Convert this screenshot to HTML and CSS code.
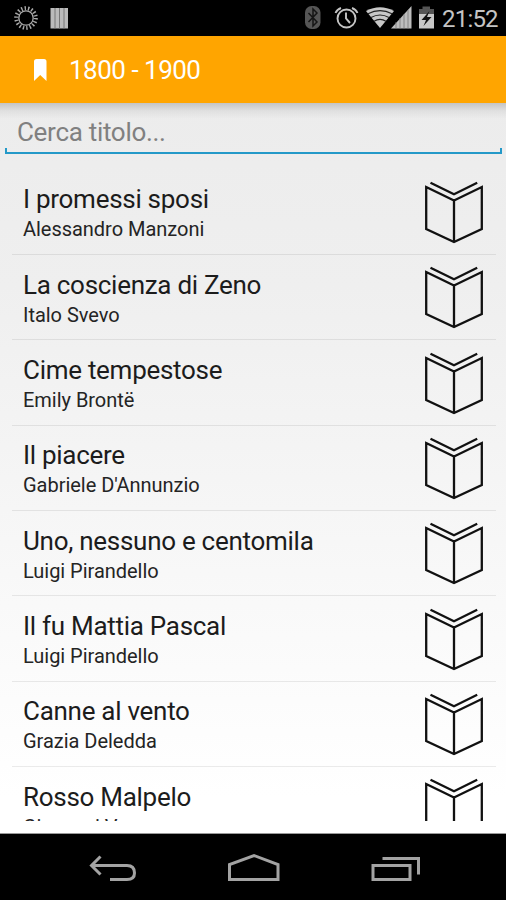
FILE: index.html
```html
<!DOCTYPE html>
<html lang="it">
<head>
  <meta charset="UTF-8">
  <meta name="viewport" content="width=device-width, initial-scale=1.0">
  <title>1800 - 1900</title>
  <link rel="stylesheet" href="styles.css">
</head>
<body>
  <!-- shared book icon -->
  <svg class="defs" width="0" height="0">
    <symbol id="book" viewBox="0 0 60 64">
      <path d="M6.5 2.7 30 14.2 53.2 2.7M2.2 7 30 20.5 57.8 7V49L30 62 2.2 49ZM30 20.5V62" fill="none" stroke="#111" stroke-width="2.3"/>
    </symbol>
  </svg>

  <div class="status">
    <svg class="status-left" width="80" height="36" viewBox="0 0 80 36">
      <circle cx="26" cy="18" r="7.2" fill="none" stroke="#aaa" stroke-width="1.3"/>
      <circle cx="26" cy="18" r="9.8" fill="none" stroke="#aaa" stroke-width="4" stroke-dasharray="1.4 2.02"/>
      <path d="M50.5 8H68V28.5H50.5Z" fill="#bbb"/>
      <path d="M55 8V28.5M59.5 8V28.5M64 8V28.5" stroke="#777" stroke-width="1"/>
    </svg>
    <svg class="status-right" width="140" height="36" viewBox="300 0 140 36">
      <rect x="305" y="6" width="15.5" height="23" rx="6.5" fill="#555"/>
      <path d="M308.5 13 317 22 313 26V9L317 13 308.5 22" fill="none" stroke="#151515" stroke-width="1.5"/>
      <g fill="none" stroke="#c4c4c4" stroke-width="1.9">
        <circle cx="346.5" cy="18.5" r="9"/>
        <path d="M346 12.5V18.5L350 23M335.5 13Q337 9.5 341 8M352 8Q356 9.5 357.5 13"/>
      </g>
      <path d="M366 11Q380 3.5 394 11L380 28Z" fill="#c8c8c8"/>
      <path d="M368 13.8Q380 7.5 392 13.8M371 17.5Q380 12.5 389 17.5M374 21.3Q380 17.5 386 21.3" fill="none" stroke="#222" stroke-width="1.2"/>
      <path d="M391 28.5 411.5 6V28.5Z" fill="#bdbdbd"/>
      <path d="M396 22V28.5M400 18V28.5M404 14V28.5M408 10V28.5" stroke="#777" stroke-width=".8"/>
      <path d="M419 9H422.5V6.5H430V9H434V16H419Z" fill="#555"/>
      <path d="M419 14H434V28.5H419Z" fill="#c8c8c8"/>
      <path d="M429.5 11 421.5 20H426L423.5 26 431.5 17H427Z" fill="#111"/>
    </svg>
    <span class="clock">21:52</span>
  </div>

  <header class="bar">
    <svg width="13" height="22" viewBox="0 0 13 22">
      <path d="M0 22V2.5Q0 0 2.5 0H10Q12.5 0 12.5 2.5V22L6.2 16Z" fill="#fff"/>
    </svg>
    <h1>1800 - 1900</h1>
  </header>

  <main class="page">
    <div class="search">Cerca titolo...</div>
    <ul class="books">
      <li><div><h2>I promessi sposi</h2><p>Alessandro Manzoni</p></div><svg class="book"><use href="#book"/></svg></li>
      <li><div><h2>La coscienza di Zeno</h2><p>Italo Svevo</p></div><svg class="book"><use href="#book"/></svg></li>
      <li><div><h2>Cime tempestose</h2><p>Emily Brontë</p></div><svg class="book"><use href="#book"/></svg></li>
      <li><div><h2>Il piacere</h2><p>Gabriele D'Annunzio</p></div><svg class="book"><use href="#book"/></svg></li>
      <li><div><h2>Uno, nessuno e centomila</h2><p>Luigi Pirandello</p></div><svg class="book"><use href="#book"/></svg></li>
      <li><div><h2>Il fu Mattia Pascal</h2><p>Luigi Pirandello</p></div><svg class="book"><use href="#book"/></svg></li>
      <li><div><h2>Canne al vento</h2><p>Grazia Deledda</p></div><svg class="book"><use href="#book"/></svg></li>
      <li><div><h2>Rosso Malpelo</h2><p>Giovanni Verga</p></div><svg class="book"><use href="#book"/></svg></li>
    </ul>
  </main>

  <nav class="nav">
    <svg width="506" height="66" viewBox="0 834 506 66" fill="none" stroke="#a3a3a3" stroke-width="3">
      <path d="M100.5 856.5 91.5 865.5 100.5 874.5M92 865.5H127Q134.5 865.5 134.5 873 134.5 879.5 127 879.5H110"/>
      <path d="M229.500 879.5V864.5L254 855.5 278 864.5V879.5Z"/>
      <path d="M373 865.5H410V879.5H373ZM382.5 858.5H418.5V874.5"/>
    </svg>
  </nav>
</body>
</html>
```

FILE: styles.css
```css
body {
  margin: 0;
  width: 506px;
  height: 900px;
  display: flex;
  flex-direction: column;
  overflow: hidden;
  background: #000;
  font-family: Roboto, "Liberation Sans", sans-serif;
}
h1, h2, p, ul {
  margin: 0;
  padding: 0;
  font-weight: 400;
}
.defs {
  position: absolute;
}
.status {
  height: 36px;
  flex: none;
  display: flex;
  background: #000;
}
.status-right {
  margin-left: 220px;
}
.clock {
  margin-left: 2px;
  font-size: 24px;
  letter-spacing: -.8px;
  line-height: 38px;
  color: #c4c4c4;
}
.bar {
  height: 67px;
  flex: none;
  display: flex;
  align-items: center;
  box-sizing: border-box;
  padding: 1px 0 0 34px;
  background: #ffa500;
}
.bar h1 {
  margin-left: 22px;
  font-size: 26px;
  letter-spacing: -.5px;
  line-height: 30px;
  color: #fff;
}
.page {
  height: 731px;
  flex: none;
  box-sizing: border-box;
  border-bottom: 1px solid #999;
  background:
    linear-gradient(rgba(0, 0, 0, .17), rgba(0, 0, 0, .05) 8px, rgba(0, 0, 0, 0) 16px),
    linear-gradient(#ececec, #efefef 25%, #fff 95%);
}
.search {
  height: 50.5px;
  box-sizing: border-box;
  margin: 0 4px 0 5px;
  padding: 14px 12px 0;
  font-size: 26px;
  letter-spacing: -.3px;
  line-height: 30px;
  color: #808080;
  /* holo style underline with small ticks at both ends */
  background:
    linear-gradient(#2499c8, #2499c8) 0 100% / 2px 6px no-repeat,
    linear-gradient(#2499c8, #2499c8) 100% 100% / 2px 6px no-repeat,
    linear-gradient(#2499c8, #2499c8) 0 100% / 100% 2px no-repeat;
}
.books {
  height: 651px;
  margin: 16.3px 10px 0 12px;
  overflow: hidden;
  list-style: none;
}
.books li {
  height: 85.33px;
  display: flex;
  justify-content: space-between;
  box-sizing: border-box;
  padding: 10.3px 12px 0 11px;
  border-bottom: 1px solid rgba(0, 0, 0, .08);
}
.books h2 {
  margin-top: 4.3px;
  font-size: 26px;
  letter-spacing: -.28px;
  line-height: 30px;
  color: #1c1c1c;
}
.books p {
  margin-top: 3px;
  font-size: 20px;
  letter-spacing: -.03px;
  line-height: 24px;
  color: #242424;
}
.book {
  width: 60px;
  height: 64px;
}
.nav {
  height: 66px;
  flex: none;
}
```
